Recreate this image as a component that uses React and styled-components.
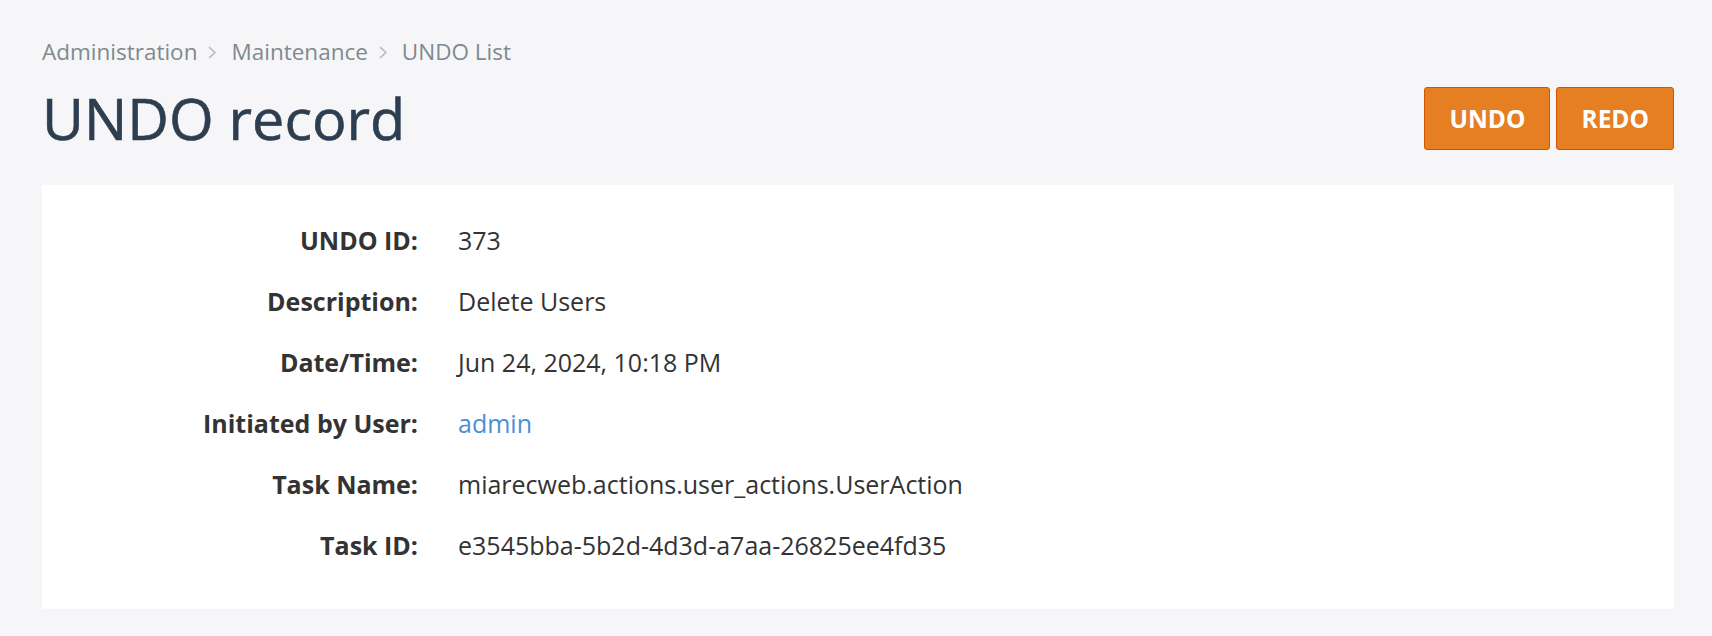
import React from 'react';
import styled, { createGlobalStyle } from 'styled-components';

/* Palette */
const pageBg = '#f6f6f8';
const navy = '#2c3e50';
const ink = '#333333';
const crumbGrey = '#7f8a8f';
const crumbSep = '#b3b8bc';
const linkBlue = '#4a8fd6';
const carrot = '#e67e22';
const pumpkin = '#d35400';

const GlobalStyle = createGlobalStyle`
  html, body {
    margin: 0;
    padding: 0;
    background: ${pageBg};
  }
  body {
    font-family: 'Open Sans', 'Noto Sans', sans-serif;
    color: ${ink};
  }
`;

const Page = styled.main`
  padding: 36px 38px 28px 42px;
`;

const Breadcrumbs = styled.nav`
  display: flex;
  align-items: center;
  font-size: 22.5px;
  line-height: normal;
  color: ${crumbGrey};
`;

const Crumb = styled.a`
  color: inherit;
  text-decoration: none;
  cursor: pointer;

  &:hover {
    color: ${navy};
  }
`;

const CrumbCurrent = styled.span`
  color: inherit;
`;

const Separator = styled.span`
  display: inline-flex;
  align-items: center;
  margin: 2px 14px 0 11px;
  color: ${crumbSep};
`;

const HeaderRow = styled.div`
  display: flex;
  align-items: center;
  justify-content: space-between;
  margin-top: 12px;
`;

const Title = styled.h1`
  margin: 0;
  font-size: 57.5px;
  font-weight: 400;
  line-height: normal;
  color: ${navy};
  -webkit-text-stroke: 0.6px ${navy};
`;

const Actions = styled.div`
  display: flex;
  gap: 6px;
`;

const ActionButton = styled.button`
  font-family: inherit;
  font-size: 24.5px;
  font-weight: 700;
  line-height: 33px;
  padding: 14px 24px;
  color: #fff;
  background: ${carrot};
  border: 1px solid ${pumpkin};
  border-radius: 3px;
  cursor: pointer;

  &:hover {
    background: ${pumpkin};
  }
`;

const Card = styled.section`
  margin-top: 28px;
  background: #fff;
  padding: 25px 0 33px;
`;

const FieldRow = styled.div`
  display: grid;
  grid-template-columns: 376px 1fr;
  column-gap: 40px;
  align-items: center;
  min-height: 61px;
  font-size: 25px;
  line-height: 61px;
`;

const Label = styled.div`
  text-align: right;
  font-weight: 700;
  color: ${ink};
`;

const Value = styled.div`
  color: ${ink};
`;

const ValueLink = styled.a`
  color: ${linkBlue};
  text-decoration: none;
  cursor: pointer;

  &:hover {
    text-decoration: underline;
  }
`;

function Chevron() {
  return (
    <Separator>
      <svg width="9" height="13" viewBox="0 0 9 13" fill="none">
        <path d="M1.5 1.5 L7 6.5 L1.5 11.5" stroke="currentColor" strokeWidth="1.6" strokeLinecap="round" strokeLinejoin="round" />
      </svg>
    </Separator>
  );
}

const record = [
  { label: 'UNDO ID:', value: '373' },
  { label: 'Description:', value: 'Delete Users' },
  { label: 'Date/Time:', value: 'Jun 24, 2024, 10:18 PM' },
  { label: 'Initiated by User:', value: 'admin', link: true },
  { label: 'Task Name:', value: 'miarecweb.actions.user_actions.UserAction' },
  { label: 'Task ID:', value: 'e3545bba-5b2d-4d3d-a7aa-26825ee4fd35' },
];

function App() {
  return (
    <>
      <GlobalStyle />
      <Page>
        <Breadcrumbs>
          <Crumb>Administration</Crumb>
          <Chevron />
          <Crumb>Maintenance</Crumb>
          <Chevron />
          <CrumbCurrent>UNDO List</CrumbCurrent>
        </Breadcrumbs>

        <HeaderRow>
          <Title>UNDO record</Title>
          <Actions>
            <ActionButton>UNDO</ActionButton>
            <ActionButton>REDO</ActionButton>
          </Actions>
        </HeaderRow>

        <Card>
          {record.map((field) => (
            <FieldRow key={field.label}>
              <Label>{field.label}</Label>
              <Value>
                {field.link ? <ValueLink href="#">{field.value}</ValueLink> : field.value}
              </Value>
            </FieldRow>
          ))}
        </Card>
      </Page>
    </>
  );
}

export default App;
